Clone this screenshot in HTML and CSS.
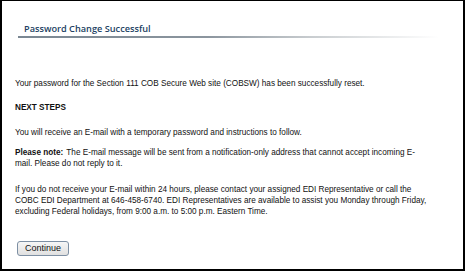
FILE: index.html
```html
<!DOCTYPE html>
<html lang="en">
<head>
<meta charset="UTF-8">
<title>Password Change Successful</title>
<link rel="stylesheet" href="styles.css">
</head>
<body>
<div class="page-ctnr">
<div class="page-title">Password Change Successful</div>
<div class="page-body">
<p class="msg first">Your password for the Section 111 COB Secure Web site (COBSW) has been successfully reset.</p>
<p class="msg steps-title">NEXT STEPS</p>
<p class="msg receive">You will receive an E-mail with a temporary password and instructions to follow.</p>
<p class="msg note"><b>Please note:</b> The E-mail message will be sent from a notification-only address that cannot accept incoming E-mail. Please do not reply to it.</p>
<p class="msg last">If you do not receive your E-mail within 24 hours, please contact your assigned EDI Representative or call the COBC EDI Department at 646-458-6740. EDI Representatives are available to assist you Monday through Friday, excluding Federal holidays, from 9:00 a.m. to 5:00 p.m. Eastern Time.</p>
<div class="btn-row"><button class="continue-btn">Continue</button></div>
</div>
</div>
</body>
</html>
```

FILE: styles.css
```css
html,body{
margin:0px;
padding:0px;
background:#fff;
width:100%;
height:100%;
}
*{font-family:'Liberation Sans', Arial, sans-serif;}
.page-ctnr{
width:465px;
height:271px;
box-sizing:border-box;
border:2px solid #000;
border-top-width:1px;
padding:21px 0px 0px 16px;
}
.page-title{
width:414px;
padding:0px 0px 1px 6px;
font-family:'Open Sans', sans-serif;
font-weight:600;
font-size:9.2px;
color:#223f63;
border-bottom:2px solid transparent;
border-image:linear-gradient(to right, #7a8792 0%, #8b959e 45%, #c9cdd0 70%, #fff 100%) 1;
}
.page-body{
width:428px;
padding-top:40px;
margin-left:-3px;
}
.msg{
margin:0px 0px 14px 0px;
font-size:8.2px;
line-height:11px;
color:#111;
}
.first{margin-bottom:13px;}
.steps-title{font-weight:bold;}
.receive{margin-bottom:9px;}
.note{
max-width:410px;
margin-bottom:15px;
}
.note b{margin-right:1px;}
.last{
max-width:420px;
margin-bottom:0px;
}
.btn-row{
padding-top:20px;
padding-left:2px;
}
.continue-btn{
font-family:'Liberation Sans', Arial, sans-serif;
font-size:9px;
color:#111;
width:52px;
height:15px;
padding:0px;
border:1px solid #7d8fa3;
border-radius:3px;
background:linear-gradient(#f6f6f6, #e0e0e0);
}
```
